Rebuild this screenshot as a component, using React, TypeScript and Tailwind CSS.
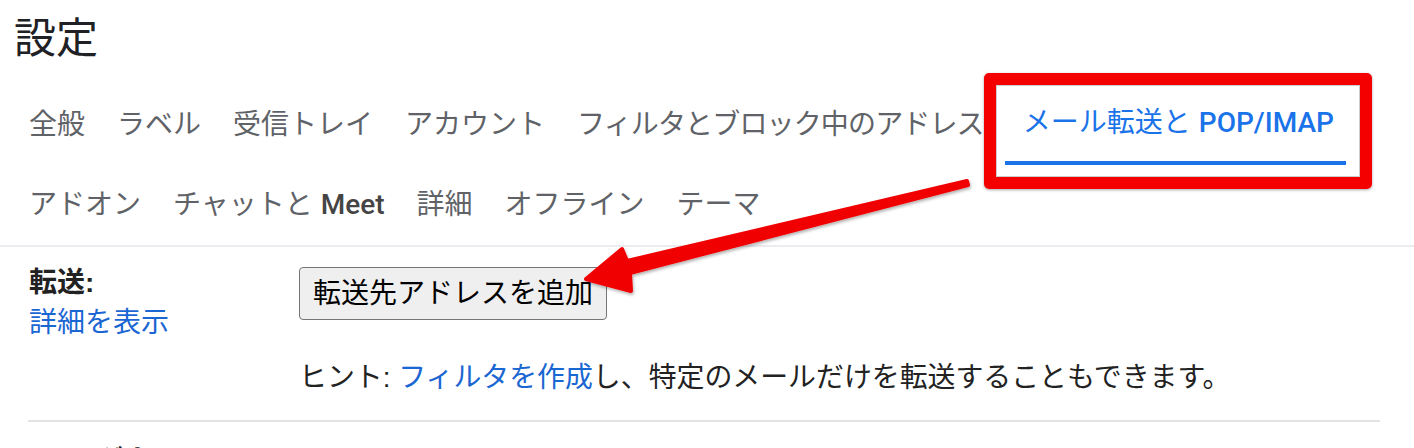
import React from "react";

const tabsRow1 = ["全般", "ラベル", "受信トレイ", "アカウント"];

function Tab({ children, className = "" }: { children: React.ReactNode; className?: string }) {
  return (
    <div className={`h-[80px] flex items-center px-4 text-[28px] leading-[40px] text-[#5f6368] whitespace-nowrap ${className}`}>
      {children}
    </div>
  );
}

export default function App() {
  return (
    <div className="relative w-[1414px] h-[448px] overflow-hidden bg-white font-['Roboto','Noto_Sans_CJK_JP',sans-serif]">
      <div className="h-[85px] pl-[14px] pt-[14px] text-[42px] leading-[50px] text-[#202124]">設定</div>

      <div className="flex pl-[13px]">
        {tabsRow1.map((t) => (
          <Tab key={t}>{t}</Tab>
        ))}
        <Tab className="tracking-[-0.85px]">フィルタとブロック中のアドレス</Tab>
        <div className="ml-[5px] h-[80px] flex flex-col">
          <div className="flex-1 flex items-center pl-[18px] pr-[12px] text-[28px] leading-[40px] text-[#1a73e8] whitespace-nowrap">
            メール転送と <span className="ml-[8px] font-medium">POP/IMAP</span>
          </div>
          <div className="h-[4px] bg-[#1a73e8]" />
        </div>
      </div>
      <div className="flex pl-[13px]">
        <Tab>アドオン</Tab>
        <Tab>
          チャットと <span className="ml-[8px] font-medium text-[#444]">Meet</span>
        </Tab>
        <Tab>詳細</Tab>
        <Tab>オフライン</Tab>
        <Tab>テーマ</Tab>
      </div>
      <div className="h-[2px] bg-[#ebebf0]" />

      <div className="pl-[28px] pr-[34px] font-['Liberation_Sans','Noto_Sans_CJK_JP',sans-serif] text-[28px] leading-[40px] text-[#222]">
        <div className="flex pt-[16px]">
          <div className="w-[271px] pl-px">
            <div className="font-bold">転送:</div>
            <div className="text-[#1a66d2]">詳細を表示</div>
          </div>
          <div className="flex flex-col items-start">
            <button className="mt-[4px] h-[53px] px-[13px] bg-[#efefef] border-[1.5px] border-[#767676] rounded-[4px] text-[28px] leading-[40px] text-black">
              転送先アドレスを追加
            </button>
            <div className="mt-[38px] whitespace-nowrap text-[27.9px]">
              ヒント: <span className="text-[#1a66d2]">フィルタを作成</span>し、特定のメールだけを転送することもできます。
            </div>
          </div>
        </div>
        <div className="mt-[22px] h-[2px] bg-[#e3e3e3]" />
        <div className="flex pt-[20px]">
          <div className="w-[271px] pl-px font-bold whitespace-nowrap">POP ダウンロード:</div>
        </div>
      </div>

      <div className="absolute left-[984px] top-[73px] w-[388px] h-[116px] border-[12px] border-[#f50000] rounded-[5px] shadow-[0_1px_3px_rgba(0,0,0,0.35),inset_0_0_0_1px_rgba(0,0,0,0.2)]" />

      <svg className="absolute left-0 top-0 pointer-events-none" width="1414" height="448" viewBox="0 0 1414 448">
        <defs>
          <filter id="sh" x="-10%" y="-30%" width="120%" height="160%">
            <feDropShadow dx="1" dy="2" stdDeviation="1.5" floodColor="#000" floodOpacity="0.3" />
          </filter>
        </defs>
        <polygon
          points="586,279 622,249 627,261 967,181 968,185 630,273 631,291"
          fill="#f00000"
          stroke="#f00000"
          strokeWidth="4"
          strokeLinejoin="round"
          filter="url(#sh)"
        />
      </svg>
    </div>
  );
}
